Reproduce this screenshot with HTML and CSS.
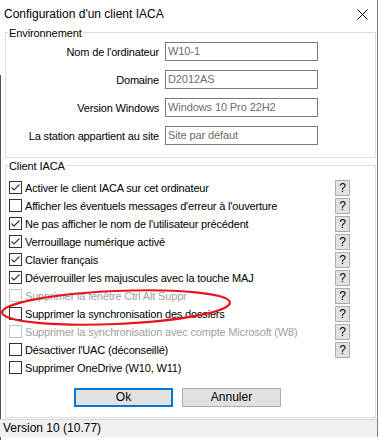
FILE: index.html
```html
<!DOCTYPE html>
<html lang="fr">
<head>
<meta charset="utf-8">
<title>Configuration d'un client IACA</title>
<link rel="stylesheet" href="styles.css">
</head>
<body>
<div class="window">
  <div class="titlebar">
    <span class="title">Configuration d'un client IACA</span>
    <svg class="close" width="11" height="11" viewBox="0 0 11 11"><path d="M0.5 0.5 L10.5 10.5 M10.5 0.5 L0.5 10.5" stroke="#000" stroke-width="1" fill="none"/></svg>
  </div>

  <fieldset class="group env">
    <legend>Environnement</legend>
    <div class="env-grid">
      <label class="env-label">Nom de l'ordinateur</label>
      <div class="field">W10-1</div>
      <label class="env-label">Domaine</label>
      <div class="field">D2012AS</div>
      <label class="env-label">Version Windows</label>
      <div class="field">Windows 10 Pro 22H2</div>
      <label class="env-label">La station appartient au site</label>
      <div class="field">Site par défaut</div>
    </div>
  </fieldset>

  <fieldset class="group client">
    <legend>Client IACA</legend>
    <div class="opts">
      <div class="opt"><span class="cb checked"></span><span class="opt-text">Activer le client IACA sur cet ordinateur</span><span class="help">?</span></div>
      <div class="opt"><span class="cb"></span><span class="opt-text">Afficher les éventuels messages d'erreur à l'ouverture</span><span class="help">?</span></div>
      <div class="opt"><span class="cb checked"></span><span class="opt-text">Ne pas afficher le nom de l'utilisateur précédent</span><span class="help">?</span></div>
      <div class="opt"><span class="cb checked"></span><span class="opt-text">Verrouillage numérique activé</span><span class="help">?</span></div>
      <div class="opt"><span class="cb checked"></span><span class="opt-text">Clavier français</span><span class="help">?</span></div>
      <div class="opt"><span class="cb checked"></span><span class="opt-text">Déverrouiller les majuscules avec la touche MAJ</span><span class="help">?</span></div>
      <div class="opt disabled"><span class="cb"></span><span class="opt-text">Supprimer la fenêtre Ctrl Alt Suppr</span><span class="help">?</span></div>
      <div class="opt"><span class="cb"></span><span class="opt-text">Supprimer la synchronisation des dossiers</span><span class="help">?</span></div>
      <div class="opt disabled"><span class="cb"></span><span class="opt-text">Supprimer la synchronisation avec compte Microsoft (W8)</span><span class="help">?</span></div>
      <div class="opt"><span class="cb"></span><span class="opt-text">Désactiver l'UAC (déconseillé)</span><span class="help">?</span></div>
      <div class="opt"><span class="cb"></span><span class="opt-text">Supprimer OneDrive (W10, W11)</span></div>
    </div>
    <div class="buttons">
      <button class="btn default">Ok</button>
      <button class="btn">Annuler</button>
    </div>
  </fieldset>

  <div class="statusbar">Version 10 (10.77)</div>

  <svg class="annotation" width="240" height="46" viewBox="0 0 240 46"><ellipse cx="116" cy="22.5" rx="114" ry="16.5" transform="rotate(-2.5 116 22.5)" fill="none" stroke="#e6141e" stroke-width="2.2"/></svg>
</div>
</body>
</html>
```
FILE: styles.css
```css
html, body {
  margin: 0;
  padding: 0;
}
body {
  width: 379px;
  height: 440px;
  overflow: hidden;
  background: linear-gradient(#555, #555) no-repeat 0 75px / 1px 365px, #fff;
  font-family: "Liberation Sans", Arial, sans-serif;
  font-size: 11px;
  color: #000;
}
.window {
  position: relative;
  width: 378px;
  border-right: 1px solid #838383;
  display: flex;
  flex-direction: column;
  padding: 0 1px 0 5px;
  box-sizing: border-box;
}
.window > * {
  flex-shrink: 0;
}
.titlebar {
  height: 25px;
  margin-left: -1px;
  display: flex;
  align-items: center;
  justify-content: space-between;
  padding-right: 8px;
}
.title {
  font-family: "Liberation Sans", Arial, sans-serif;
  font-size: 12px;
  padding-top: 2px;
}
.close {
  margin-top: 3px;
}
.group {
  margin: 0;
  border: 1px solid #dcdcdc;
  padding: 0;
  min-width: 0;
}
.group legend {
  padding: 2px 1px 0 1px;
  margin-left: 2px;
  line-height: 13px;
  letter-spacing: -0.1px;
}
.env-grid {
  display: grid;
  grid-template-columns: 153px 153px;
  column-gap: 6px;
  row-gap: 9px;
  padding: 2px 0 12px 0;
  align-items: center;
  letter-spacing: -0.17px;
}
.env-label {
  text-align: right;
  white-space: nowrap;
  padding-top: 1px;
}
.field {
  height: 19px;
  box-sizing: border-box;
  border: 1px solid #7a7a7a;
  color: #6d6d6d;
  padding: 0 2px;
  line-height: 17px;
  white-space: nowrap;
  letter-spacing: -0.1px;
}
.opts {
  display: flex;
  flex-direction: column;
  padding: 5px 25px 0 3px;
}
.opt {
  height: 18px;
  display: flex;
  align-items: center;
}
.cb {
  width: 13px;
  height: 13px;
  box-sizing: border-box;
  border: 1px solid #333;
  background: #fff;
  flex: 0 0 auto;
  margin-right: 3px;
}
.cb.checked {
  background: #fff url("data:image/svg+xml;utf8,<svg xmlns='http://www.w3.org/2000/svg' width='11' height='11'><path d='M1.5 5.5 L4 8 L9.5 2.5' stroke='%23333' stroke-width='1.1' fill='none'/></svg>") no-repeat center;
}
.opt-text {
  flex: 1 1 auto;
  white-space: nowrap;
  letter-spacing: -0.17px;
  padding-top: 1px;
}
.disabled .opt-text {
  color: #a0a0a0;
}
.disabled .cb {
  border-color: #c6c6c6;
}
.help {
  width: 15px;
  height: 16px;
  box-sizing: border-box;
  border: 1px solid #adadad;
  background: #e1e1e1;
  display: flex;
  align-items: center;
  justify-content: center;
  font-size: 12px;
  line-height: 14px;
  flex: 0 0 auto;
  margin-top: 1px;
}
.buttons {
  display: flex;
  gap: 9px;
  padding: 12px 0 10px 68px;
}
.btn {
  width: 99px;
  height: 19px;
  box-sizing: border-box;
  border: 1px solid #adadad;
  background: #e1e1e1;
  font-family: "Liberation Sans", Arial, sans-serif;
  font-size: 12px;
  color: #000;
  padding: 0;
  line-height: 15px;
}
.btn.default {
  border: 2px solid #0078d7;
}
.statusbar {
  margin: 1px -1px 0 -5px;
  border-top: 1px solid #d4d4d4;
  background: #f0f0f0;
  height: 18px;
  box-sizing: border-box;
  padding: 1px 0 0 3px;
  font-size: 12px;
  line-height: 15px;
}
.annotation {
  position: absolute;
  left: 0;
  top: 285px;
}
```
